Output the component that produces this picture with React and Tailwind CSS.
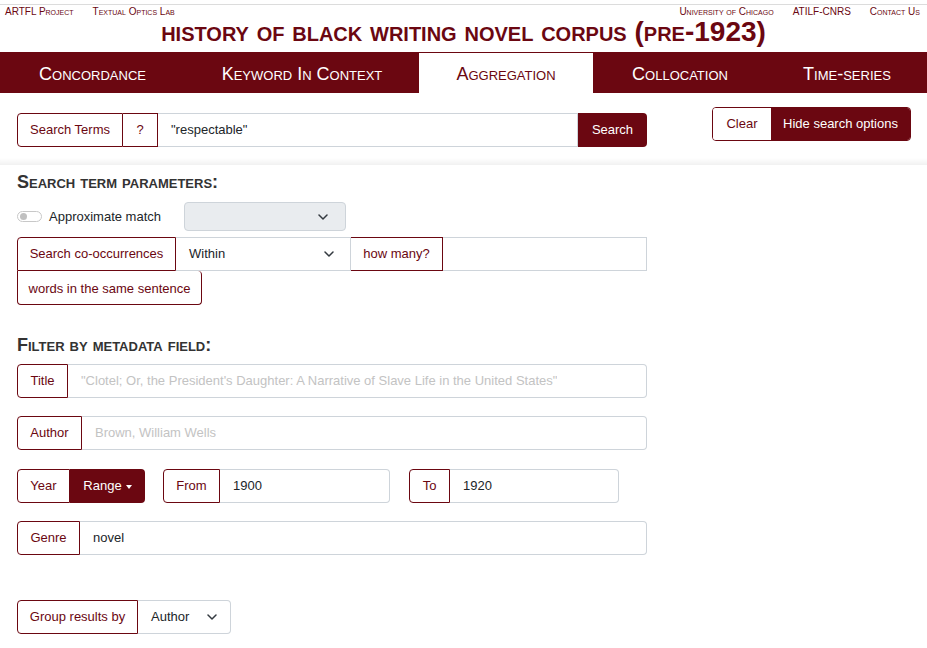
import React from 'react';

const RED = 'text-[#6b0711]';

function Chevron() {
  return (
    <svg width="10" height="6" viewBox="0 0 10 6" className="text-[#343a40]">
      <polyline points="1,1 5,5 9,1" fill="none" stroke="currentColor" strokeWidth="1.5" strokeLinecap="round" strokeLinejoin="round" />
    </svg>
  );
}

function Label({ children, className = '' }) {
  return (
    <div className={`flex items-center justify-center border border-[#6b0711] bg-white ${RED} ${className}`}>
      {children}
    </div>
  );
}

function Field({ value, placeholder, className = '' }) {
  return (
    <div className={`flex items-center border border-l-0 border-[#ced4da] bg-white px-[13px] ${className}`}>
      {value ? (
        <span className="text-[#212529]">{value}</span>
      ) : (
        <span className="text-[#c3c3c3] whitespace-nowrap overflow-hidden">{placeholder}</span>
      )}
    </div>
  );
}

function Heading({ children, className = '' }) {
  return (
    <h2 className={`text-[18px] font-bold leading-[24px] text-[#333] [font-variant:small-caps] ${className}`}>
      {children}
    </h2>
  );
}

export default function App() {
  const tabs = [
    { name: 'Concordance', w: 'w-[185px]' },
    { name: 'Keyword In Context', w: 'w-[234px]' },
    { name: 'Aggregation', w: 'w-[174px]', active: true },
    { name: 'Collocation', w: 'w-[174px]' },
    { name: 'Time-series', w: 'flex-1' },
  ];

  return (
    <div className="min-h-screen bg-white font-['Liberation_Sans',Arial,sans-serif] text-[13px]">
      {/* header */}
      <div className="mt-[4px] border-t border-[#dcdcdc]" />
      <div className="flex h-[14px] items-center justify-between px-[5px] text-[10px] leading-none text-[#6b0711] [font-variant:small-caps]">
        <div className="flex gap-[19px]">
          <span>ARTFL Project</span>
          <span>Textual Optics Lab</span>
        </div>
        <div className="flex gap-[19px] pr-[2px]">
          <span>University of Chicago</span>
          <span>ATILF-CNRS</span>
          <span>Contact Us</span>
        </div>
      </div>
      <div className="flex h-[33px] items-center justify-center pb-[8px]">
        <h1 className="text-[28px] font-bold leading-none text-[#6b0711] [font-variant:small-caps]">
          history of black writing novel corpus (pre-1923)
        </h1>
      </div>

      {/* nav */}
      <nav className="flex h-[41px] bg-[#6b0711]">
        {tabs.map((t) => (
          <div
            key={t.name}
            className={`${t.w} flex items-center justify-center pt-[3px] text-[18px] [font-variant:small-caps] ${
              t.active ? 'mt-[1px] bg-white text-[#6b0711]' : 'text-white'
            }`}
          >
            {t.name}
          </div>
        ))}
      </nav>

      {/* search bar */}
      <div className="flex items-start justify-between pl-[17px] pr-[16px] pt-[14px] pb-[11px]">
        <div className="mt-[6px] flex h-[34px] w-[630px]">
          <Label className="w-[106px] rounded-l-[4px]">Search Terms</Label>
          <Label className="w-[35px] border-l-0">?</Label>
          <div className="flex flex-1 items-center border border-l-0 border-[#ced4da] px-[13px] text-[#212529]">
            "respectable"
          </div>
          <div className="flex w-[69px] items-center justify-center rounded-r-[4px] bg-[#6b0711] text-white">
            Search
          </div>
        </div>
        <div className="flex h-[34px] w-[199px] overflow-hidden rounded-[4px] border border-[#6b0711]">
          <div className={`flex w-[58px] items-center justify-center bg-white ${RED}`}>Clear</div>
          <div className="flex flex-1 items-center justify-center bg-[#6b0711] text-white">Hide search options</div>
        </div>
      </div>
      <div className="h-[7px] bg-linear-to-b from-white to-[#f1f1f1]" />

      <div className="pl-[17px]">
        <Heading className="mt-[5px]">Search term parameters:</Heading>

        <div className="mt-[8px] flex h-[29px] items-center">
          <div className="flex h-[11px] w-[25px] items-center rounded-full border border-[#c8c8c8] bg-white pl-[2px]">
            <div className="h-[7px] w-[7px] rounded-full bg-[#c0c0c0]" />
          </div>
          <span className="ml-[7px] text-[#212529]">Approximate match</span>
          <div className="ml-[23px] flex h-[29px] w-[162px] items-center justify-end rounded-[4px] border border-[#ced4da] bg-[#e9ecef] pr-[17px]">
            <Chevron />
          </div>
        </div>

        <div className="mt-[6px] flex h-[34px] w-[630px]">
          <Label className="w-[159px] rounded-tl-[4px]">Search co-occurrences</Label>
          <div className="flex w-[175px] items-center justify-between border border-l-0 border-[#ced4da] pl-[13px] pr-[16px] text-[#212529]">
            <span>Within</span>
            <Chevron />
          </div>
          <Label className="w-[92px] border-l-0">how many?</Label>
          <div className="flex-1 border border-l-0 border-[#ced4da]" />
        </div>
        <Label className="h-[34px] w-[185px] rounded-b-[4px] rounded-tr-[4px] border-t-0 pt-[2px]">
          words in the same sentence
        </Label>

        <Heading className="mt-[28px]">Filter by metadata field:</Heading>

        <div className="mt-[7px] flex h-[34px] w-[630px]">
          <Label className="w-[51px] rounded-l-[4px]">Title</Label>
          <Field
            className="flex-1 rounded-r-[4px]"
            placeholder={'"Clotel; Or, the President\'s Daughter: A Narrative of Slave Life in the United States"'}
          />
        </div>

        <div className="mt-[18px] flex h-[34px] w-[630px]">
          <Label className="w-[65px] rounded-l-[4px]">Author</Label>
          <Field className="flex-1 rounded-r-[4px]" placeholder="Brown, William Wells" />
        </div>

        <div className="mt-[19px] flex h-[34px] items-stretch">
          <Label className="w-[53px] rounded-l-[4px]">Year</Label>
          <div className="flex w-[75px] items-center justify-center gap-[4px] rounded-r-[4px] bg-[#6b0711] text-white">
            <span>Range</span>
            <span className="mt-[1px] h-0 w-0 border-x-[3.5px] border-t-[4px] border-x-transparent border-t-white" />
          </div>
          <Label className="ml-[18px] w-[57px] rounded-l-[4px]">From</Label>
          <Field className="w-[170px] rounded-r-[4px]" value="1900" />
          <Label className="ml-[19px] w-[41px] rounded-l-[4px]">To</Label>
          <Field className="w-[169px] rounded-r-[4px]" value="1920" />
        </div>

        <div className="mt-[18px] flex h-[34px] w-[630px]">
          <Label className="w-[63px] rounded-l-[4px]">Genre</Label>
          <Field className="flex-1 rounded-r-[4px]" value="novel" />
        </div>

        <div className="mt-[45px] flex h-[34px]">
          <Label className="w-[121px] rounded-l-[4px]">Group results by</Label>
          <div className="flex w-[93px] items-center justify-between rounded-r-[4px] border border-l-0 border-[#ced4da] pl-[13px] pr-[13px] text-[#212529]">
            <span>Author</span>
            <Chevron />
          </div>
        </div>
      </div>
    </div>
  );
}
